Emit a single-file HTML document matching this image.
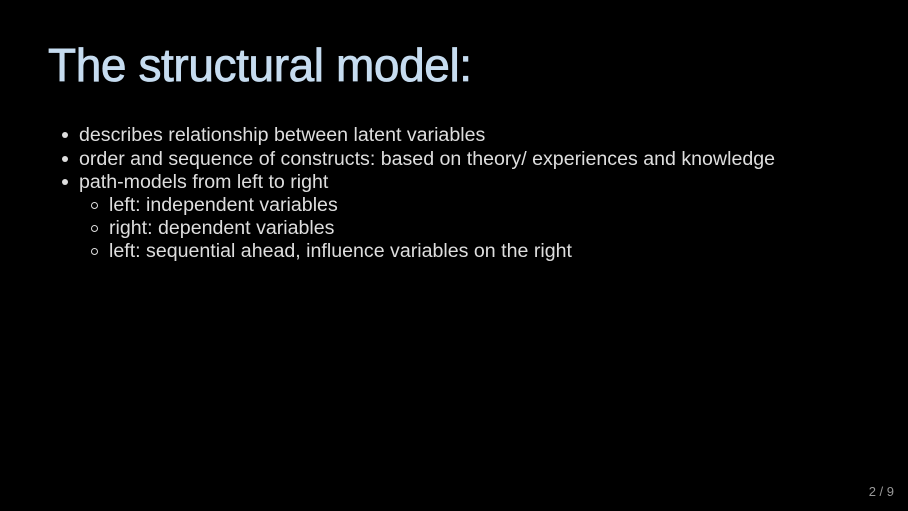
<!DOCTYPE html>
<html><head><style>
html,body{margin:0;padding:0;background:#000;width:908px;height:511px;overflow:hidden;font-family:"Liberation Sans",sans-serif;}
h1{position:absolute;left:48px;top:38px;margin:0;font-size:46px;font-weight:normal;color:#c6dcf0;letter-spacing:-0.4px;white-space:nowrap;-webkit-text-stroke:0.8px #c6dcf0;}
.l{position:absolute;color:#dedede;font-size:19.6px;white-space:nowrap;}
.b{position:absolute;width:6px;height:6px;border-radius:50%;background:#dedede;}
.c{position:absolute;width:5px;height:5px;border-radius:50%;border:1px solid #dedede;}
.pg{position:absolute;right:14px;top:484px;color:#999;font-size:13px;}
</style></head><body>
<h1>The structural model:</h1>
<div class="b" style="left:62px;top:132px"></div><div class="l" style="left:79px;top:124px">describes relationship between latent variables</div>
<div class="b" style="left:62px;top:156px"></div><div class="l" style="left:79px;top:148px">order and sequence of constructs: based on theory/ experiences and knowledge</div>
<div class="b" style="left:62px;top:179px"></div><div class="l" style="left:79px;top:171px">path-models from left to right</div>
<div class="c" style="left:91px;top:202px"></div><div class="l" style="left:109px;top:194px">left: independent variables</div>
<div class="c" style="left:91px;top:225px"></div><div class="l" style="left:109px;top:217px">right: dependent variables</div>
<div class="c" style="left:91px;top:248px"></div><div class="l" style="left:109px;top:240px">left: sequential ahead, influence variables on the right</div>
<div class="pg">2 / 9</div>
</body></html>
